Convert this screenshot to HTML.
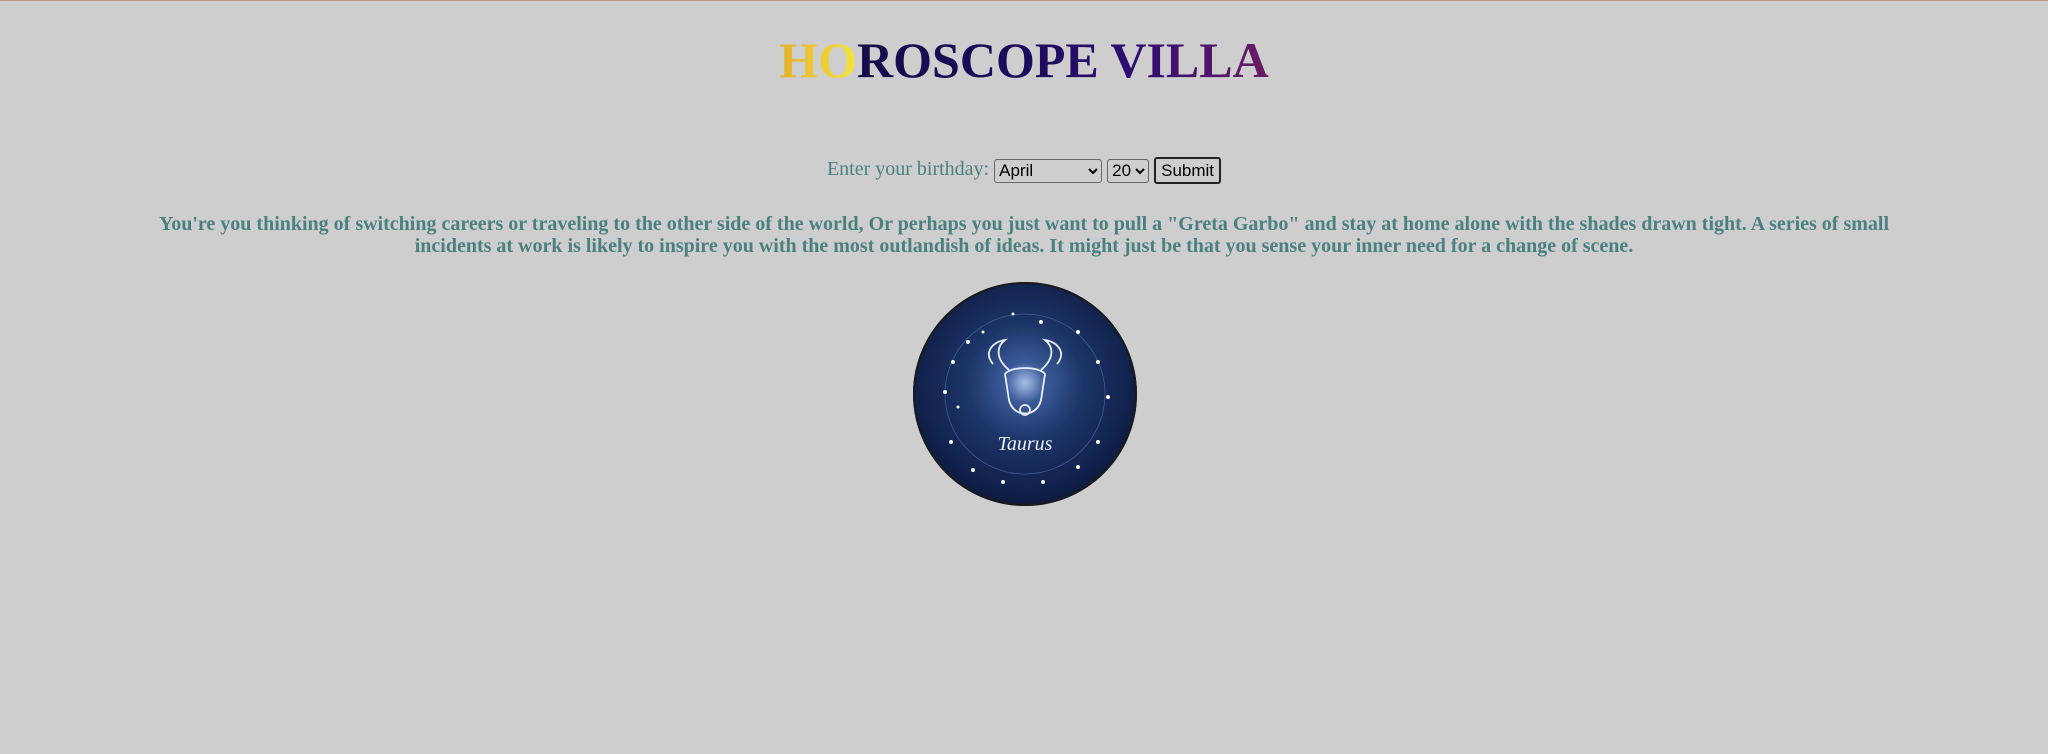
<!DOCTYPE html>
<html><head><meta charset="utf-8"><style>
html,body{margin:0;padding:0;width:2048px;height:754px;background:#cecece;overflow:hidden}
body{border-top:1px solid #b59a8a;box-sizing:border-box;font-family:"Liberation Serif",serif}
h1{position:absolute;top:27px;left:0;width:2048px;margin:0;text-align:center;font-size:50px;font-weight:bold;line-height:66px}
h1 span{background:linear-gradient(90deg,#e6b030 0%,#f3e23a 15.4%,#150b4a 15.5%,#1c0b5a 50%,#2e0c70 72%,#6a1c64 100%);-webkit-background-clip:text;background-clip:text;color:transparent}
.form{position:absolute;top:157px;left:0;width:2048px;text-align:center;font-size:20px;color:#4a8080}
select,button{font-family:"Liberation Sans",sans-serif;font-size:17px;vertical-align:middle;background:#cecece;border:1px solid #666;border-radius:3px;height:24px;color:#000}
button{border:2px solid #222;height:27px;padding:0 5px}
p{position:absolute;top:213px;left:140px;width:1768px;margin:0;text-align:center;font-weight:bold;font-size:20px;line-height:22px;color:#4a8080}
.img{position:absolute;left:913px;top:282px;width:224px;height:224px;border-radius:50%;background:radial-gradient(circle at 50% 45%,#a8c0e8 0%,#3a5a98 12%,#1c3568 35%,#10204a 65%,#060c1e 100%);box-shadow:0 0 0 2px #1a1a1a inset}
</style></head><body>
<h1><span>HOROSCOPE VILLA</span></h1>
<div class="form">Enter your birthday: <select style="width:108px"><option>April</option></select> <select style="width:42px"><option>20</option></select> <button>Submit</button></div>
<p>You're you thinking of switching careers or traveling to the other side of the world, Or perhaps you just want to pull a "Greta Garbo" and stay at home alone with the shades drawn tight. A series of small incidents at work is likely to inspire you with the most outlandish of ideas. It might just be that you sense your inner need for a change of scene.</p>
<div class="img"><svg width="224" height="224" viewBox="0 0 224 224">
<circle cx="112" cy="112" r="80" fill="none" stroke="#5a78b0" stroke-width="0.8" opacity="0.6"/>
<g fill="none" stroke="#e8eefc" stroke-width="1.8">
<path d="M80 82 C70 70 80 60 92 58 C82 66 84 78 96 88"/>
<path d="M144 82 C154 70 144 60 132 58 C142 66 140 78 128 88"/>
<path d="M92 92 C98 84 126 84 132 92 L128 118 C124 136 100 136 96 118 Z"/>
<circle cx="112" cy="128" r="5"/>
</g>
<text x="112" y="168" text-anchor="middle" font-family="Liberation Serif,serif" font-style="italic" font-size="20" fill="#e8eefc">Taurus</text>
<g fill="#fff">
<circle cx="55" cy="60" r="2"/><circle cx="70" cy="50" r="1.5"/><circle cx="40" cy="80" r="2"/><circle cx="32" cy="110" r="2"/><circle cx="45" cy="125" r="1.5"/><circle cx="38" cy="160" r="2"/><circle cx="60" cy="188" r="2"/><circle cx="90" cy="200" r="2"/><circle cx="130" cy="200" r="2"/><circle cx="165" cy="185" r="2"/><circle cx="185" cy="160" r="2"/><circle cx="195" cy="115" r="2"/><circle cx="185" cy="80" r="2"/><circle cx="165" cy="50" r="2"/><circle cx="128" cy="40" r="2"/><circle cx="100" cy="32" r="1.5"/>
</g></svg></div>
</body></html>
